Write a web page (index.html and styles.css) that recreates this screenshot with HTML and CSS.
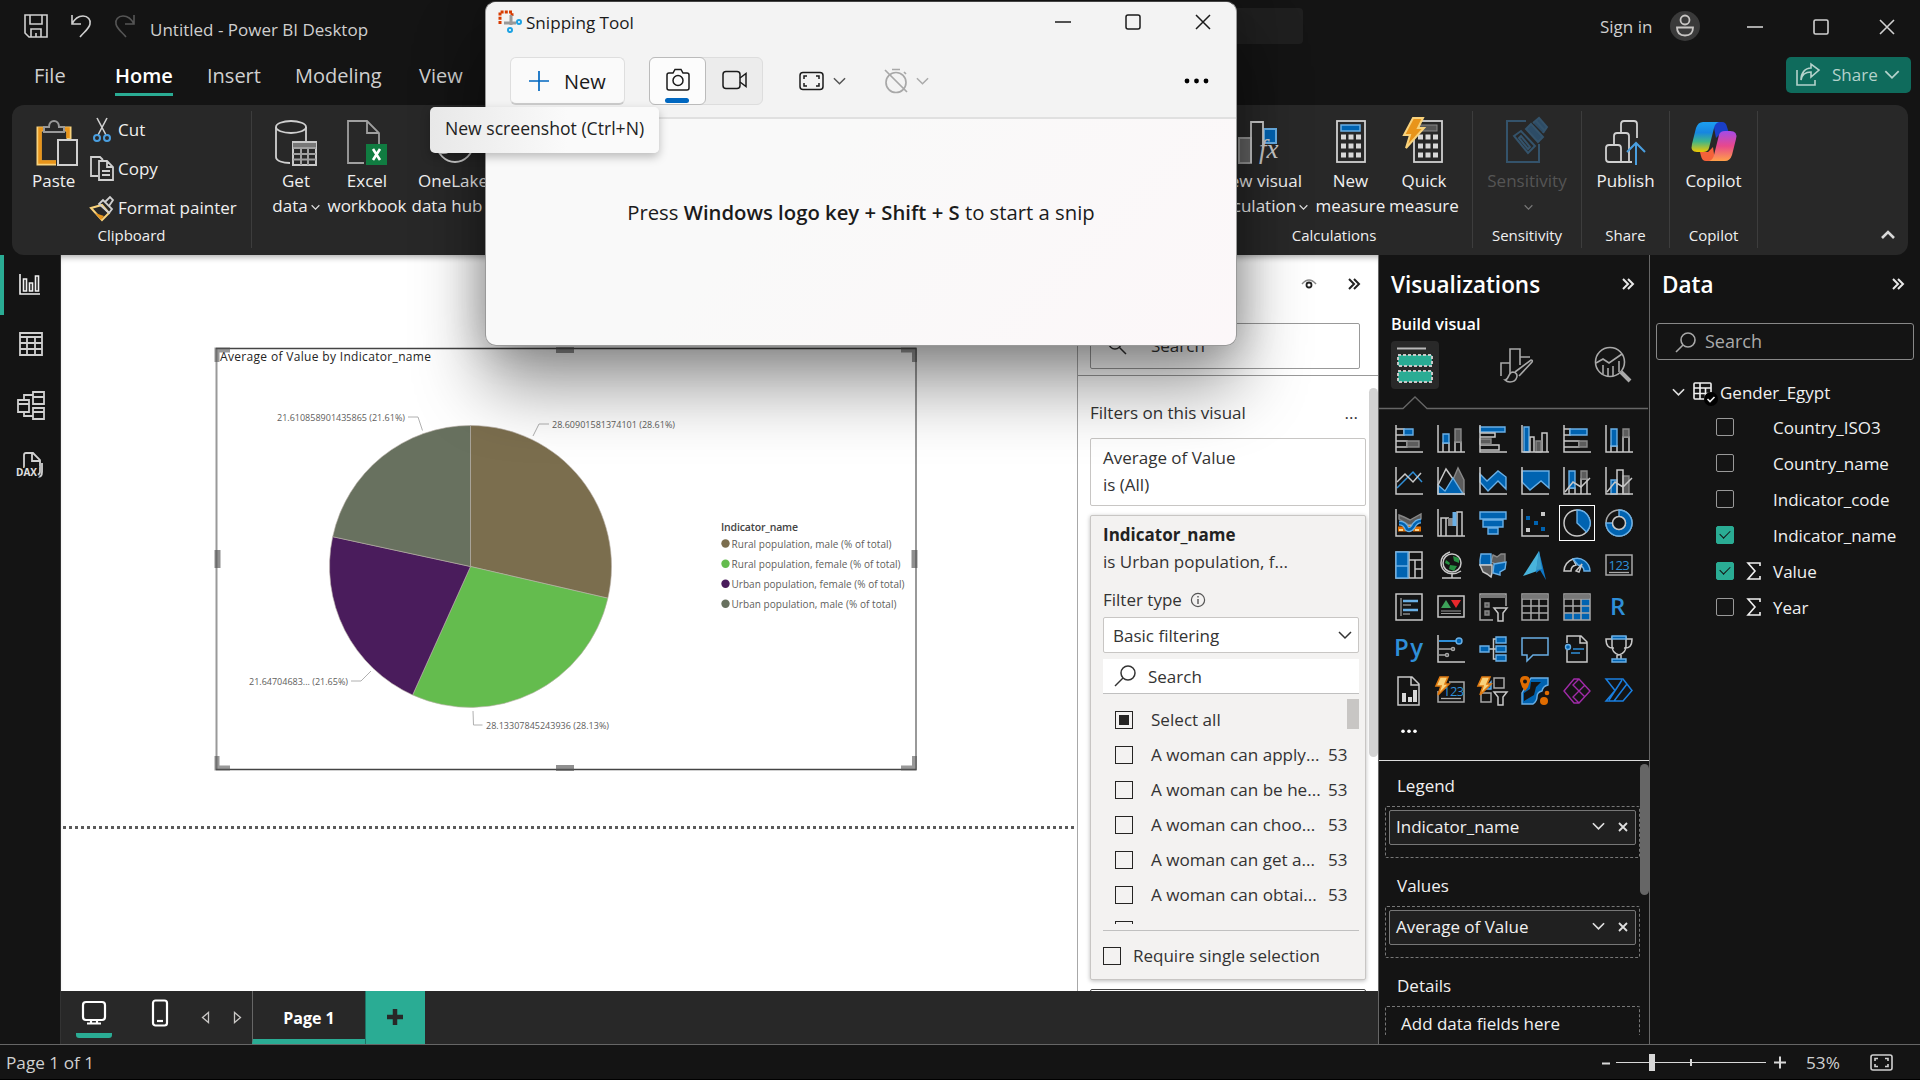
FILE: index.html
```html
<!DOCTYPE html>
<html lang="en">
<head>
<meta charset="utf-8">
<title>Untitled - Power BI Desktop</title>
<link rel="stylesheet" href="styles.css">
</head>
<body>
<svg class="defs" aria-hidden="true">
  <defs>
    <g id="axis"><path class="ln" d="M1 0v27h27"/></g>
    <g id="chev"><path d="M1 1l6 6 6-6"/></g>
    <g id="bolt"><path d="M5 0h8L10 7h4L3 18l3-9H1z" fill="#f8d27c" stroke="#e07a10" stroke-width="1.6"/></g>
    <g id="dbl"><path d="M1 1l5 5-5 5M6 1l5 5-5 5" fill="none" stroke-width="2"/></g>
    <linearGradient id="cpA" x1="0" y1="0" x2="0" y2="1"><stop offset="0" stop-color="#1c9ff0"/><stop offset=".35" stop-color="#1786e0"/><stop offset=".65" stop-color="#3fb58a"/><stop offset="1" stop-color="#f0c800"/></linearGradient>
    <linearGradient id="cpB" x1="0" y1="0" x2="0" y2="1"><stop offset="0" stop-color="#a44be8"/><stop offset=".5" stop-color="#e8488c"/><stop offset="1" stop-color="#ffa048"/></linearGradient>
  </defs>
</svg>

<div class="app">
  <header class="top">
    <div class="titlebar">
      <svg class="ic-save" width="24" height="24" viewBox="0 0 24 24"><path d="M1 1h22v22H5l-4-4zM6 1v9h12V1M7 23v-8h10v8M12 19v4" class="ln2"/></svg>
      <svg class="ic-undo" width="22" height="24" viewBox="0 0 22 24"><path d="M2 1v9h9M2 10C5 4 9 2 13 2c5 0 8 4 7 8-1 5-6 8-10 13" class="ln2"/></svg>
      <svg class="ic-redo" width="22" height="24" viewBox="0 0 22 24"><path d="M20 1v9h-9M20 10C17 4 13 2 9 2 4 2 1 6 2 10c1 5 6 8 10 13" class="ln2 dim"/></svg>
      <span class="doc-title">Untitled - Power BI Desktop</span>
      <div class="global-search"></div>
      <span class="signin">Sign in</span>
      <svg class="avatar" width="30" height="30" viewBox="0 0 30 30"><circle cx="15" cy="15" r="15" fill="#3a3a3a"/><g fill="none" stroke="#c8c6c4" stroke-width="1.8"><circle cx="15" cy="9" r="4.5"/><path d="M7 16.500h16c0 5-3 8-8 8s-8-3-8-8z"/></g></svg>
      <svg class="wbtn" width="16" height="16" viewBox="0 0 16 16"><path class="ln2" d="M0 8h16"/></svg>
      <svg class="wbtn" width="16" height="16" viewBox="0 0 16 16"><rect class="ln2" x="1" y="1" width="14" height="14" rx="1.500"/></svg>
      <svg class="wbtn" width="16" height="16" viewBox="0 0 16 16"><path class="ln2" d="M1 1l14 14M15 1L1 15"/></svg>
    </div>
    <nav class="tabs">
      <span class="t-file">File</span><span class="t-home"><b>Home</b></span><span class="t-insert">Insert</span><span class="t-model">Modeling</span><span>View</span>
      <button class="share"><svg width="24" height="22" viewBox="0 0 24 22"><path d="M1 6v15h18v-5M5 16c1-6 5-8 10-8v5l8-7-8-6v4C9 4 5 9 5 16z" class="sh"/></svg><span>Share</span><svg width="16" height="10" viewBox="0 0 14 9"><use href="#chev" class="sh"/></svg></button>
    </nav>
    <section class="ribbon">
      <div class="group clip">
        <div class="clip-body">
          <div class="big paste">
            <svg width="42" height="46" viewBox="0 0 42 46"><path d="M8 9H2v34h17M27 9h5v10" fill="none" stroke="#f8d27c" stroke-width="5"/><path d="M9 9H3v33h16M26 9h5v9" fill="none" stroke="#e8941a" stroke-width="3.500"/><path d="M7 12V7h5c0-8 10-8 10 0h5v5z" fill="#282828" stroke="#999" stroke-width="2"/><rect x="21" y="20" width="19" height="25" fill="#282828" stroke="#d0d0d0" stroke-width="2"/></svg>
            <span>Paste</span>
          </div>
          <div class="smalls">
            <div><svg width="26" height="26" viewBox="0 0 26 26"><path d="M8 1l9 17M18 1L9 18" stroke="#d0d0d0" stroke-width="1.600" fill="none"/><circle cx="8" cy="21" r="3" fill="none" stroke="#4a9fe0" stroke-width="2"/><circle cx="18" cy="21" r="3" fill="none" stroke="#4a9fe0" stroke-width="2"/></svg>Cut</div>
            <div><svg width="26" height="26" viewBox="0 0 26 26"><path d="M9 20H2V1h9l3 3M10 5h8l6 6v13H10zM18 5v6h6M13 15h8M13 19h8" class="ln3"/></svg>Copy</div>
            <div><svg width="26" height="26" viewBox="0 0 26 26"><path d="M2 13l11-3 7 8-7 7z" fill="#282828" stroke="#f8d27c" stroke-width="2"/><path d="M6 18l9 3-3 4z" fill="#e8941a"/><path d="M10 9l4-4 9 9-3 4zM16 7l5-5 3 3-4 6" class="ln3" fill="#282828"/></svg>Format painter</div>
          </div>
        </div>
        <div class="glabel">Clipboard</div>
      </div>
      <div class="group data-g">
        <div class="big w-get"><svg width="42" height="46" viewBox="0 0 42 46"><ellipse cx="16" cy="7" rx="15" ry="6" class="ln3"/><path d="M1 7v30c0 4 7 6 14 6M31 7v14" class="ln3"/><rect x="18" y="22" width="23" height="23" fill="#282828" stroke="#c8c8c8" stroke-width="2"/><path d="M18 25h23" stroke="#777" stroke-width="4"/><path d="M18 28h23M18 34h23M18 39.500h23M26 28v17M33 28v17" stroke="#a0a0a0" stroke-width="2"/></svg><span>Get<br>data<svg class="mc" width="9" height="7" viewBox="0 0 14 9"><use href="#chev" class="cw"/></svg></span></div>
        <div class="big w-xl"><svg width="42" height="46" viewBox="0 0 42 46"><path d="M18 43H2V1h19l12 12v12M21 1v12h12" class="ln3 mid"/><rect x="20" y="24" width="21" height="21" fill="#107c41"/><path d="M27 29l7 11M34 29l-7 11" stroke="#fff" stroke-width="2.600"/></svg><span>Excel<br>workbook</span></div>
        <div class="big w-ol"><svg width="42" height="46" viewBox="0 0 42 46"><circle cx="23" cy="24" r="18" class="ln3"/><path d="M6 32c8 4 16-3 20-8" class="ln3"/></svg><span>OneLake<br>data hub<svg class="mc" width="9" height="7" viewBox="0 0 14 9"><use href="#chev" class="cw"/></svg></span></div>
      </div>
      <div class="grow"></div>
      <div class="group calc">
        <div class="row">
          <div class="big w-nv"><svg width="44" height="46" viewBox="0 0 44 46"><rect x="1" y="18" width="12" height="25" fill="#666" stroke="#999" stroke-width="2"/><rect x="26" y="9" width="12" height="14" fill="#0063b1" stroke="#69afe5" stroke-width="2"/><path d="M13 43V2h12v26" class="ln3"/><text x="21" y="38" class="fx">fx</text></svg><span>New visual<br>calculation<svg class="mc" width="9" height="7" viewBox="0 0 14 9"><use href="#chev" class="cw"/></svg></span></div>
          <div class="big w-nm"><svg width="32" height="46" viewBox="0 0 32 46"><rect x="2" y="1" width="28" height="41" class="ln3"/><rect x="6" y="5" width="19" height="6" fill="#0063b1" stroke="#69afe5" stroke-width="1.500"/><path d="M6 17h20M6 26h20M6 35h20" stroke="#d8d8d8" stroke-width="5" stroke-dasharray="5 2.500"/></svg><span>New<br>measure</span></div>
          <div class="big w-qm"><svg width="42" height="46" viewBox="0 0 42 46"><rect x="11" y="1" width="28" height="41" class="ln3"/><rect x="16" y="5" width="18" height="6" fill="#555" stroke="#888"/><path d="M15 17h20M15 26h20M15 35h20" stroke="#d8d8d8" stroke-width="5" stroke-dasharray="5 2.500"/><path d="M10-2h10l-5 10h6L3 28l4-13H1z" fill="#e8941a" stroke="#f8d27c" stroke-width="2"/></svg><span>Quick<br>measure</span></div>
        </div>
        <div class="glabel">Calculations</div>
      </div>
      <div class="group sens">
        <div class="big off"><svg width="42" height="46" viewBox="0 0 42 46"><g fill="none" stroke="#34536b" stroke-width="2"><path d="M20 1H1v41h32V24"/><path d="M8 16l7-5 14 15-7 7zM13 18l2-2 9 11-2 2z"/><path d="M20 9l5-5 12 13-5 5zM27 3l6-5 8 9-4 6M30 1l8 9" fill="#2d4c66"/></g></svg><span>Sensitivity<br><svg class="mc" width="9" height="7" viewBox="0 0 14 9"><use href="#chev" class="cw"/></svg></span></div>
        <div class="glabel">Sensitivity</div>
      </div>
      <div class="group shr">
        <div class="big"><svg width="42" height="46" viewBox="0 0 42 46"><path d="M16 42H4q-3 0-3-3V28q0-3 3-3h9q3 0 3 3v14h11M9 24v-8q0-3 3-3h9q3 0 3 3v26M16 12V4q0-3 3-3h10q3 0 3 3v14" class="ln3"/><path d="M31 45V23M22 32l9-9 9 9" fill="none" stroke="#4a9fe0" stroke-width="2"/></svg><span>Publish</span></div>
        <div class="glabel">Share</div>
      </div>
      <div class="group cop">
        <div class="big"><svg width="46" height="46" viewBox="0 0 46 46"><path d="M22 2h9q4 0 5 5l2 6h-8l-5 5z" fill="#1a3fc8"/><path d="M24 41h-9q-4 0-5-5l-1-4h8l5-5z" fill="#f4623a"/><path d="M12 2h16q-4 1-5 6l-5 20q-1 4-6 4H6q-7 0-5-8L5 8q2-6 7-6z" fill="url(#cpA)"/><path d="M34 41H18q4-1 5-6l5-20q1-4 6-4h5q8 0 6 8l-4 16q-2 6-7 6z" fill="url(#cpB)"/></svg><span>Copilot</span></div>
        <div class="glabel">Copilot</div>
      </div>
      <div class="tail"><svg width="14" height="10" viewBox="0 0 14 10"><path d="M1 8l6-6 6 6" fill="none" stroke="#d8d8d8" stroke-width="2.600"/></svg></div>
    </section>
  </header>

  <main class="work">
    <aside class="rail">
      <div class="on"><svg width="24" height="24" viewBox="0 0 24 24"><path d="M2 1v20h20M5.500 6h3v12h-3zM11.500 10h3v8h-3zM17.500 3h3v15h-3z" class="lnw"/></svg></div>
      <div><svg width="26" height="26" viewBox="0 0 26 26"><path d="M2 2h22v22H2zM2 6h22M2 12h22M2 18h22M9 6v18M17 6v18" class="ln3"/></svg></div>
      <div><svg width="30" height="30" viewBox="0 0 30 30"><path d="M2 10h11v12H2zM2 14h11M17 2h11v12H17zM17 7h11M17 18h11v11H17zM17 22h11M8 10V5h9M8 22v4h9" class="ln3"/></svg></div>
      <div><svg width="28" height="28" viewBox="0 0 28 28"><path d="M8 17V4q0-2 2-2h7l7 7v12q0 2-3 3M16 2v8h8M26 12v9q0 5-4 5" class="ln3"/><text x="0" y="25" class="dax">DAX</text></svg></div>
    </aside>

    <section class="center">
      <div class="stage">
        <div class="canvas">
          <svg class="visual" width="704" height="426" viewBox="214 346 704 426">
            <text x="220" y="361" class="vt" textLength="211">Average of Value by Indicator_name</text>
            <g stroke="#b8b0a8" stroke-width=".6">
              <path fill="#7b6e4e" d="M470.500 566.500V425.500A141 141 0 0 1 607.900 598.200z"/>
              <path fill="#64bc4e" d="M470.500 566.500L607.900 598.200A141 141 0 0 1 412.600 695z"/>
              <path fill="#4a1c5c" d="M470.500 566.500L412.600 695A141 141 0 0 1 332.700 536.700z"/>
              <path fill="#68715f" d="M470.500 566.500L332.700 536.700A141 141 0 0 1 470.500 425.500z"/>
            </g>
            <path d="M408 417h10l4.500 13.500M549 424h-10l-6 12M473 711l.5 14h9M371 671l-10 10h-10" fill="none" stroke="#b0b0b0"/>
            <g class="dl">
              <text x="277" y="421" textLength="128">21.610858901435865 (21.61%)</text>
              <text x="552" y="428" textLength="123">28.60901581374101 (28.61%)</text>
              <text x="486" y="729" textLength="123">28.13307845243936 (28.13%)</text>
              <text x="249" y="685" textLength="99">21.64704683... (21.65%)</text>
            </g>
            <text x="721" y="531" class="lt" textLength="77">Indicator_name</text>
            <circle cx="725.500" cy="543.500" r="4.200" fill="#7b6e4e"/><circle cx="725.500" cy="563.800" r="4.200" fill="#64bc4e"/><circle cx="725.500" cy="583.800" r="4.200" fill="#4a1c5c"/><circle cx="725.500" cy="603.800" r="4.200" fill="#68715f"/>
            <g class="dl lg">
              <text x="731.500" y="547.500" textLength="160">Rural population, male (% of total)</text>
              <text x="731.500" y="567.500" textLength="169">Rural population, female (% of total)</text>
              <text x="731.500" y="587.500" textLength="173">Urban population, female (% of total)</text>
              <text x="731.500" y="607.500" textLength="165">Urban population, male (% of total)</text>
            </g>
            <path d="M216.500 348v422M916 348v422" stroke="#999" stroke-width="2"/>
            <path d="M216 348.500h700M216 769.500h700" stroke="#444" stroke-width="1.400"/>
            <path d="M217 362V350h13M901 350h13.500v12M217 756v12h13M901 768h13.500v-12" fill="none" stroke="#555" stroke-opacity=".6" stroke-width="5"/>
            <path d="M556 350h18M556 768h18M217.500 550v18M914.500 550v18" stroke="#555" stroke-opacity=".65" stroke-width="6"/>
          </svg>
          <div class="page-edge"></div>
        </div>
        <aside class="filters">
          <div class="f-head">
            <svg width="16" height="14" viewBox="0 0 16 14"><path d="M1 7Q8-1 15 7" fill="none" stroke="#888" stroke-width="1.500"/><circle cx="8" cy="8" r="2.500" fill="none" stroke="#222" stroke-width="1.800"/></svg>
            <svg width="12" height="12" viewBox="0 0 12 12" stroke="#222"><use href="#dbl"/></svg>
          </div>
          <div class="f-search"><svg width="20" height="20" viewBox="0 0 20 20"><circle cx="8" cy="8" r="6" class="lk"/><path d="M12.500 12.500l6.500 6.500" class="lk"/></svg>Search</div>
          <div class="f-body">
            <div class="f-title">Filters on this visual<i>...</i></div>
            <div class="card">Average of Value<br>is (All)</div>
            <div class="card open">
              <b>Indicator_name</b>
              <div>is Urban population, f...</div>
              <div class="ftype">Filter type<svg width="16" height="16" viewBox="0 0 16 16"><circle cx="8" cy="8" r="6.600" fill="none" stroke="#555" stroke-width="1.200"/><path d="M8 7v5M8 4v1.600" stroke="#555" stroke-width="1.400"/></svg></div>
              <div class="select">Basic filtering<svg width="14" height="9" viewBox="0 0 14 9"><use href="#chev" class="lk"/></svg></div>
              <div class="isearch"><svg width="22" height="22" viewBox="0 0 22 22"><circle cx="14" cy="8" r="7" class="lk"/><path d="M9 13l-8 8" class="lk"/></svg>Search</div>
              <div class="list">
                <div class="li"><i class="cb part"></i><span>Select all</span></div>
                <div class="li"><i class="cb"></i><span>A woman can apply...</span><em>53</em></div>
                <div class="li"><i class="cb"></i><span>A woman can be he...</span><em>53</em></div>
                <div class="li"><i class="cb"></i><span>A woman can choo...</span><em>53</em></div>
                <div class="li"><i class="cb"></i><span>A woman can get a...</span><em>53</em></div>
                <div class="li"><i class="cb"></i><span>A woman can obtai...</span><em>53</em></div>
                <div class="li"><i class="cb"></i><span>A woman can open...</span><em>53</em></div>
                <div class="thumb"></div>
              </div>
              <div class="single"><i class="cb"></i>Require single selection</div>
            </div>
            <div class="card next"></div>
            <div class="f-scroll"></div>
          </div>
        </aside>
      </div>
      <div class="pages">
        <div class="pg-mon"><svg width="26" height="26" viewBox="0 0 26 26"><rect x="2" y="2" width="22" height="18" rx="3" class="lnw2"/><path d="M6 23.500h14M10 20v3M16 20v3" class="lnw2"/></svg></div>
        <div class="pg-ph"><svg width="18" height="28" viewBox="0 0 18 28"><rect x="2" y="1.500" width="14" height="25" rx="2.500" class="lnw2"/><path d="M6 22h6" class="lnw2"/></svg></div>
        <svg class="tri" width="9" height="13" viewBox="0 0 9 13"><path d="M7.500 1.500v10L1.500 6.500z" fill="none" stroke="#c8c6c4" stroke-width="1.300"/></svg>
        <svg class="tri" width="9" height="13" viewBox="0 0 9 13"><path d="M1.500 1.500v10l6-5z" fill="none" stroke="#c8c6c4" stroke-width="1.300"/></svg>
        <div class="pg-tab">Page 1</div>
        <div class="pg-add"><svg width="18" height="18" viewBox="0 0 18 18"><path d="M9 1v16M1 9h16" stroke="#282828" stroke-width="4.500"/></svg></div>
      </div>
    </section>

    <aside class="viz">
      <div class="p-head">Visualizations<svg width="12" height="12" viewBox="0 0 12 12" stroke="#e8e8e8"><use href="#dbl"/></svg></div>
      <div class="sub">Build visual</div>
      <div class="modes">
        <div class="m1"><svg width="36" height="36" viewBox="0 0 36 36"><path d="M0 1.500h29" stroke="#b8b8b8" stroke-width="2"/><path d="M1 8h34v11H1zM1 24h34v11H1z" fill="#2aac94" stroke="#c8c8c8" stroke-width="2" stroke-dasharray="3 2"/></svg></div>
        <svg width="34" height="36" viewBox="0 0 34 36"><path d="M1 29V16h9M10 27V2h10v16M20 10h10" class="ln2 gy"/><path d="M5 33c4 0 3-8 8-8 7 1 4 10-3 10-3 0-4-1-5-2zM15 25L31 13q2 0 1 2L19 29" class="ln2 gy" fill="#141414"/></svg>
        <svg width="38" height="38" viewBox="0 0 38 38"><circle cx="16" cy="16" r="14.500" class="ln2 gy"/><path d="M2 17l7-4 6 4 13-9M9 19v9M14 22v8M19 20v10M25 15v11" class="ln2 gy"/><path d="M27 26l9 9" stroke="#aaa" stroke-width="4"/></svg>
      </div>
      <svg class="notch" width="269" height="14" viewBox="0 0 269 14"><path d="M0 12.500h24L36 1l12 11.500h221" fill="none" stroke="#666" stroke-width="1.300"/></svg>
      <div class="gallery">
        <svg viewBox="0 0 28 28"><path class="ln" d="M1 4h8v6H1M1 16h11v6H1"/><path class="bl" d="M9 4h9v6H9z"/><path class="gr" d="M12 16h12v6H12z"/><use href="#axis"/></svg>
        <svg viewBox="0 0 28 28"><path class="ln" d="M6 27v-9h6v9M18 27V17h6v10"/><path class="bl" d="M6 9h6v9H6z"/><path class="gr" d="M18 4h6v13h-6z"/><use href="#axis"/></svg>
        <svg viewBox="0 0 28 28"><path class="bl" d="M1 2h25v5H1z"/><path class="ln" d="M1 8h15v4H1M1 20h19v5H1"/><path class="gr" d="M1 14h11v5H1z"/><use href="#axis"/></svg>
        <svg viewBox="0 0 28 28"><path class="bl" d="M3 2h5v25H3z"/><path class="ln" d="M9 27V12h4v15M21 27V8h5v19"/><path class="gr" d="M15 16h5v11h-5z"/><use href="#axis"/></svg>
        <svg viewBox="0 0 28 28"><path class="ln" d="M1 4h6v6H1M1 16h15v6H1"/><path class="bl" d="M7 4h17v6H7z"/><path class="gr" d="M16 16h8v6h-8z"/><use href="#axis"/></svg>
        <svg viewBox="0 0 28 28"><path class="ln" d="M6 27v-6h6v6M18 27V12h6v15"/><path class="bl" d="M6 4h6v17H6z"/><path class="gr" d="M18 4h6v8h-6z"/><use href="#axis"/></svg>

        <svg viewBox="0 0 28 28"><path d="M2 21L18 5l9 10" fill="none" stroke="#2f8fd8" stroke-width="1.500"/><path class="ln" d="M2 15l8-8 8 8 8-9"/><use href="#axis"/></svg>
        <svg viewBox="0 0 28 28"><path class="gr" d="M15 15L21 1l6 12v14z"/><path class="ln" d="M1 18L9 2l7 10"/><path class="bl" d="M1 18l7 6 8-13 10 16H1z"/><use href="#axis"/></svg>
        <svg viewBox="0 0 28 28"><path class="bl" d="M1 7l7 7L19 4l8 6v12l-8-8-10 10-8-9z"/><use href="#axis"/></svg>
        <svg viewBox="0 0 28 28"><path class="bl" d="M1 4h27v17l-8-7-11 9-8-8z"/><use href="#axis"/></svg>
        <svg viewBox="0 0 28 28"><path class="ln" d="M6 27v-6h6v6M18 27V12h6v15"/><path class="bl" d="M6 4h6v17H6z"/><path class="gr" d="M18 4h6v8h-6z"/><path class="ln" d="M2 25l8-10 8 5 9-9"/><use href="#axis"/></svg>
        <svg viewBox="0 0 28 28"><path class="bl" d="M6 13h6v14H6z"/><path class="gr" d="M18 9h6v18h-6z"/><path class="ln" d="M12 27V3h6v24M2 25l8-10 8 5 9-9"/><use href="#axis"/></svg>

        <svg viewBox="0 0 28 28"><path d="M3 20h7l4-4 5 4h7" fill="none" stroke="#e06c00" stroke-width="5"/><path d="M12 16h4M4 21h4M20 21h4" stroke="#fbd38a" stroke-width="2"/><path class="gr" d="M4 6l5 2 6 3 11-6v5l-7 5-5 1-10-6z"/><path d="M4 14q6 0 8 6 3 2 6-2 3-6 8-6" fill="none" stroke="#69afe5" stroke-width="5"/><path d="M4 14q6 0 8 6 3 2 6-2 3-6 8-6" fill="none" stroke="#0063b1" stroke-width="2.500"/><use href="#axis"/></svg>
        <svg viewBox="0 0 28 28"><path class="ln" d="M4 27V9h5v18M20 27V3h5v24M9 9h3"/><path fill="#888" d="M11 9h5v8h-5z"/><path fill="#69afe5" d="M15.500 3h4v14h-4z"/><use href="#axis"/></svg>
        <svg viewBox="0 0 28 28"><path class="bl" d="M1 3h26v7H1zM4 11h20v7H4zM9 19h10v6H9z"/></svg>
        <svg viewBox="0 0 28 28"><path fill="#0063b1" d="M5 7h4v4H5zM13 12h4v4h-4zM20 18h4v4h-4z"/><path fill="#c8c8c8" d="M20 3h4v4h-4zM5 19h4v4H5z"/><use href="#axis"/></svg>
        <svg class="sel" viewBox="-4 -4 36 36"><circle cx="14" cy="14" r="13" class="ln"/><path class="bl" d="M14 1a13 13 0 0 1 9.500 22L14 14z"/></svg>
        <svg viewBox="0 0 28 28"><circle cx="14" cy="14" r="13" class="ln gy"/><path class="bl" d="M14 1A13 13 0 1 1 1 14h6.500A6.500 6.500 0 1 0 14 7.500z"/><circle cx="14" cy="14" r="6.500" fill="#141414" class="lw"/></svg>

        <svg viewBox="0 0 28 28"><path class="ln" d="M1 1h26v26H1zM14 1v26M14 9h13M20 9v18M20 18h7"/><path class="bl" d="M1 1h12v14H1zM1 15h12v12H1z"/></svg>
        <svg viewBox="0 0 28 28"><circle cx="15" cy="12" r="9" class="ln"/><path fill="#259040" d="M16 5l6 2v5l-5-2zM9 9l4 3-1 2-4-2zM13 14l7 1-3 5-5-2z"/><path class="ln" d="M13 1Q4 4 4 12q0 7 7 10 7 2 13-2M15 23v4M5 27h19"/></svg>
        <svg viewBox="0 0 28 28"><path class="gr" d="M14 4l4 2 4-3h4v8l-10 2-4-2z"/><path class="bl" d="M2 3h10v11H1V9z"/><path fill="#5c5c5c" class="lw" d="M1 14h12v8l-1 4-4-3-4-2z"/><path class="bl" d="M15 13l12-2-1 7-5 3v3l-7-2z"/></svg>
        <svg viewBox="0 0 28 28"><path fill="#49b4dc" d="M18 0L2 25l17-6z"/><path fill="#0f78c8" d="M18 0l7 29-6-10-4 3z"/><path fill="#3a9cc8" d="M18 0l3 18-6 1z"/></svg>
        <svg viewBox="0 0 28 28"><path class="ln" d="M1 20A13 13 0 0 1 10 8l3 6q-5 1-5 6z"/><path class="bl" d="M10 8a13 13 0 0 1 17 12h-6q0-5-6-6z"/><path class="ln" d="M13 20l6-7-3 8z"/></svg>
        <svg viewBox="0 0 28 28"><path class="ln gy" d="M1 4h26v20H1z"/><text x="3.500" y="19" class="num">123</text><path d="M4 21.500h20" stroke="#aaa" stroke-width="1.300"/></svg>

        <svg viewBox="0 0 28 28"><path class="ln" d="M1 1h26v26H1z"/><path d="M6 5v18M8 12h8M8 21h7" stroke="#888" stroke-width="1.500"/><path d="M8 8h15M8 17h15" stroke="#69afe5" stroke-width="2.500"/></svg>
        <svg viewBox="0 0 28 28"><path class="ln" d="M1 3h26v21H1z"/><path fill="#3da35a" d="M4 15l5-8 5 8z"/><path fill="#e8282c" d="M14 7h10l-5 8z"/><path d="M4 18h20M4 20.500h20" stroke="#999" stroke-width="1"/></svg>
        <svg viewBox="0 0 28 28"><path class="ln gy" d="M14 27H1V1h26v12"/><path d="M1 3.500h26" stroke="#777" stroke-width="3"/><path class="gr" d="M6 10h4v4H6zM6 18h4v4H6z"/><path class="ln" d="M15 15h13l-4 5v8h-5v-8z"/></svg>
        <svg viewBox="0 0 28 28"><path class="ln gy" d="M1 1h26v26H1zM1 6h26M1 13h26M1 20h26M10 6v21M18 6v21"/><path d="M1 3.500h26" stroke="#777" stroke-width="4"/></svg>
        <svg viewBox="0 0 28 28"><path fill="#0063b1" d="M18 6h9v21H1v-7h17z"/><path class="ln gy" d="M1 1h26v26H1zM1 6h26M1 13h26M1 20h26M10 6v21M18 6v21"/><path d="M1 3.500h26" stroke="#777" stroke-width="4"/></svg>
        <svg viewBox="0 0 28 28"><text x="5" y="22" class="big-r">R</text></svg>

        <svg viewBox="0 0 28 28"><text x="-1" y="21" class="big-r" textLength="29">Py</text></svg>
        <svg viewBox="0 0 28 28"><path d="M2 6h20" stroke="#2f8fd8" stroke-width="2"/><circle cx="22" cy="6" r="3" class="bl"/><path class="ln gy" d="M2 14h12M2 20h7"/><circle cx="16" cy="14" r="1.500" class="ln gy"/><circle cx="10" cy="20" r="1.500" class="ln gy"/><use href="#axis"/></svg>
        <svg viewBox="0 0 28 28"><path class="ln" d="M10 14h7M17 4h-2.500v20H17"/><path class="bl" d="M1 11h9v6H1zM17 2h10v6H17zM17 11h10v6H17zM17 20h10v6H17z"/></svg>
        <svg viewBox="0 0 28 28"><path fill="none" stroke="#69afe5" stroke-width="1.500" d="M1 3h26v17H12l-6 6v-6H1z"/></svg>
        <svg viewBox="0 0 28 28"><path class="ln" d="M4 8V1h14l6 6v20H4V15M17 1v7h7"/><circle cx="5" cy="12" r="2.500" class="bl"/><path d="M10 14h11M8 18h9" stroke="#2f8fd8" stroke-width="1.500"/></svg>
        <svg viewBox="0 0 28 28"><path class="ln" d="M7 4H1q0 10 8 9M21 4h6q0 10-8 9M7 2h14v9q0 7-7 9-7-2-7-9zM12 20v4M16 20v4"/><path class="bl" d="M7 1h14v3H7zM7 24h14v3H7z"/></svg>

        <svg viewBox="0 0 28 28"><path class="ln lw" d="M3 0h14l7 7v21H3zM16 0v8h8"/><path fill="#d8d8d8" d="M7 16h4v9H7zM13 20h4v5h-4zM18 13h4v12h-4z"/></svg>
        <svg viewBox="0 0 28 28"><path class="ln gy" d="M1 14v11h26V5H12"/><text x="6" y="19" class="num sm">123</text><path d="M4 21.500h20" stroke="#aaa" stroke-width="1.300"/><use href="#bolt" x="-2"/></svg>
        <svg viewBox="0 0 28 28"><path class="ln gy" d="M15 1h10v10H15zM2 16h10v9H2z"/><path class="bl" d="M6 12l6-7v7z"/><path class="ln" fill="#141414" d="M15 15h13l-4 5v8h-5v-8z"/><use href="#bolt" x="-2"/></svg>
        <svg viewBox="0 0 28 28"><path class="bl" d="M10 1h17v7q-5 1-6 6-5 1-5 6 0 4-4 7H1V16z"/><path fill="#141414" d="M10 5h10l-5 5-2 8-5 3-5 3v-8l6-4z"/><path fill="#e06c00" d="M4-1q5 0 5 5l-2 6-3 4-3-4-2-6q0-5 5-5z"/><circle cx="4" cy="4.500" r="2" fill="#141414"/><circle cx="23" cy="24" r="4" fill="#e06c00"/><circle cx="26" cy="16" r="2.300" fill="#e06c00"/></svg>
        <svg viewBox="0 0 28 28"><path fill="none" stroke="#a02ba8" stroke-width="1.400" d="M1 14L11 2h5l11 12-11 12h-5zM16 2l-6 6 12 12M16 26l-6-6L22 8"/></svg>
        <svg viewBox="0 0 28 28"><path fill="none" stroke="#1a7fe0" stroke-width="1.500" d="M1 2h17l9 11.500L18 24H1l9-10.500zM17 3L4 23M22 7L9 24"/></svg>
        <svg viewBox="0 0 28 28"><circle cx="8" cy="12.200" r="1.800" fill="#fff"/><circle cx="14" cy="12.200" r="1.800" fill="#fff"/><circle cx="20" cy="12.200" r="1.800" fill="#fff"/></svg>
      </div>
      <div class="wells">
        <div class="wl">Legend</div>
        <div class="well"><div class="pill"><span>Indicator_name</span><svg width="13" height="9" viewBox="0 0 14 9"><use href="#chev" class="cw"/></svg><svg width="10" height="10" viewBox="0 0 10 10"><path d="M1 1l8 8M9 1L1 9" class="cw"/></svg></div></div>
        <div class="wl">Values</div>
        <div class="well"><div class="pill"><span>Average of Value</span><svg width="13" height="9" viewBox="0 0 14 9"><use href="#chev" class="cw"/></svg><svg width="10" height="10" viewBox="0 0 10 10"><path d="M1 1l8 8M9 1L1 9" class="cw"/></svg></div></div>
        <div class="wl">Details</div>
        <div class="well empty">Add data fields here</div>
        <div class="w-scroll"></div>
      </div>
    </aside>

    <aside class="data">
      <div class="p-head">Data<svg width="12" height="12" viewBox="0 0 12 12" stroke="#e8e8e8"><use href="#dbl"/></svg></div>
      <div class="d-search"><svg width="22" height="22" viewBox="0 0 22 22"><circle cx="13" cy="9" r="7" class="ln2 gy"/><path d="M8 14l-7 7" class="ln2 gy"/></svg>Search</div>
      <div class="table-row"><svg width="13" height="9" viewBox="0 0 14 9"><use href="#chev" class="cw"/></svg><svg width="26" height="26" viewBox="0 0 26 26"><path d="M2 3q0-1 1-1h15q1 0 1 1v14q0 1-1 1H3q-1 0-1-1zM2 7h17M2 12.500h17M8 2v16M13.500 7v11" class="lnw"/><circle cx="19" cy="18" r="7" fill="#000"/><path d="M15.500 18l2.500 2.500 4.500-4.500" class="lnw"/></svg><span>Gender_Egypt</span></div>
      <div class="field"><i class="dcb"></i><s></s>Country_ISO3</div>
      <div class="field"><i class="dcb"></i><s></s>Country_name</div>
      <div class="field"><i class="dcb"></i><s></s>Indicator_code</div>
      <div class="field"><i class="dcb ck"></i><s></s>Indicator_name</div>
      <div class="field"><i class="dcb ck"></i><s><svg width="16" height="18" viewBox="0 0 16 18"><path d="M14 4V1H2l7 8-7 8h12v-3" class="lnw"/></svg></s>Value</div>
      <div class="field"><i class="dcb"></i><s><svg width="16" height="18" viewBox="0 0 16 18"><path d="M14 4V1H2l7 8-7 8h12v-3" class="lnw"/></svg></s>Year</div>
    </aside>
  </main>

  <footer class="status">
    <span>Page 1 of 1</span>
    <svg class="zoomer" width="186" height="20" viewBox="0 0 186 20"><path d="M1 11.500h8M173 10.500h12M179 4.500v12" stroke="#d8d8d8" stroke-width="2"/><path d="M15 10.500h150" stroke="#d8d8d8"/><path d="M51 2v17" stroke="#d8d8d8" stroke-width="6"/><path d="M90 7v7" stroke="#d8d8d8" stroke-width="2"/></svg>
    <span class="pct">53%</span>
    <svg class="fit" width="23" height="17" viewBox="0 0 23 17"><rect x="1" y="1" width="21" height="15" rx="2" class="ln2"/><path d="M8 4.500H5V7M15 4.500h3V7M8 12.500H5V10M15 12.500h3V10" class="ln2"/></svg>
  </footer>
</div>

<div class="snip">
  <div class="s-title">
    <svg width="24" height="24" viewBox="0 0 24 24"><path d="M2 14V2h12v4" fill="none" stroke="#d83b01" stroke-width="3" stroke-dasharray="3 1.200"/><path d="M13 5v10M6 13h12" stroke="#999" stroke-width="3"/><circle cx="21" cy="12" r="2" fill="#fff" stroke="#1ba1e2" stroke-width="2"/><circle cx="12" cy="20" r="2" fill="#fff" stroke="#1ba1e2" stroke-width="2"/></svg>
    <span>Snipping Tool</span>
    <svg class="sb" width="16" height="16" viewBox="0 0 16 16"><path class="k" d="M0 8h16"/></svg>
    <svg class="sb" width="16" height="16" viewBox="0 0 16 16"><rect class="k" x="1" y="1" width="14" height="14" rx="2"/></svg>
    <svg class="sb" width="16" height="16" viewBox="0 0 16 16"><path class="k" d="M1 1l14 14M15 1L1 15"/></svg>
  </div>
  <div class="s-bar">
    <div class="new"><svg width="20" height="20" viewBox="0 0 20 20"><path d="M10 0v20M0 10h20" stroke="#0067c0" stroke-width="1.700"/></svg><span>New</span></div>
    <div class="seg">
      <div class="cam"><svg width="26" height="24" viewBox="0 0 26 24"><path d="M4 5h4l2-3.500h6L18 5h4q2 0 2 2v13q0 2-2 2H4q-2 0-2-2V7q0-2 2-2z" class="k"/><circle cx="13" cy="12.500" r="5" class="k"/></svg></div>
      <div class="vid"><svg width="26" height="20" viewBox="0 0 26 20"><rect x="1" y="1.500" width="17" height="17" rx="3" class="k"/><path d="M18 8l6-4.500v13L18 12" class="k"/></svg></div>
    </div>
    <svg class="rect" width="26" height="20" viewBox="0 0 26 20"><rect x="1" y="1.500" width="23" height="17" rx="3" class="k"/><path d="M8 5H5v3M17 5h3v3M8 15H5v-3M17 15h3v-3" class="k"/></svg>
    <svg class="c1" width="13" height="9" viewBox="0 0 14 9"><use href="#chev" class="kg"/></svg>
    <svg class="timer" width="26" height="26" viewBox="0 0 26 26"><g fill="none" stroke="#a8a8a8" stroke-width="1.700"><circle cx="13" cy="14.500" r="10"/><path d="M2 2l22 22M9 1.500h8M21 4l2 2"/></g></svg>
    <svg class="c1" width="13" height="9" viewBox="0 0 14 9"><use href="#chev" class="kl"/></svg>
    <svg class="more" width="26" height="6" viewBox="0 0 26 6"><circle cx="3" cy="3" r="2.400"/><circle cx="12.500" cy="3" r="2.400"/><circle cx="22" cy="3" r="2.400"/></svg>
  </div>
  <div class="s-body">Press <b>Windows logo key + Shift + S</b> to start a snip</div>
</div>
<div class="tip">New screenshot (Ctrl+N)</div>
</body>
</html>
```
FILE: styles.css
```css
* { box-sizing: border-box; }
body { margin: 0; width: 1920px; height: 1080px; overflow: hidden; background: #141414; color: #e6e6e6; font: 17px/25px "Open Sans", "Noto Sans", sans-serif; }
svg { display: block; flex: none; overflow: visible; }
i, em { font-style: normal; }
s { text-decoration: none; }
.defs { position: absolute; width: 0; height: 0; }

/* strokes shared by the icons */
.ln { fill: none; stroke: #c8c8c8; stroke-width: 1.5; }
.lw { stroke: #c8c8c8; stroke-width: 1.5; }
.ln2 { fill: none; stroke: #d0d0d0; stroke-width: 1.6; }
.ln3 { fill: none; stroke: #d0d0d0; stroke-width: 1.8; }
.lnw { fill: none; stroke: #f0f0f0; stroke-width: 1.6; }
.lnw2 { fill: none; stroke: #fff; stroke-width: 2.2; }
.bl { fill: #0063b1; stroke: #69afe5; stroke-width: 1.4; }
.gr { fill: #5c5c5c; stroke: #888; stroke-width: 1.4; }
.gy { stroke: #a8a8a8; }
.mid { stroke: #a0a0a0; }
.dim { stroke: #555; }
.lk { fill: none; stroke: #333; stroke-width: 1.5; }
.k { fill: none; stroke: #1b1b1b; stroke-width: 1.5; }
.kg { fill: none; stroke: #555; stroke-width: 1.6; }
.kl { fill: none; stroke: #aaa; stroke-width: 1.6; }
.cw { fill: none; stroke: #e0e0e0; stroke-width: 1.8; }
.sh { fill: none; stroke: #b4d2cb; stroke-width: 1.6; }

.app { display: grid; grid-template-columns: minmax(0, 1fr); grid-template-rows: 255px 789px 36px; height: 1080px; }

/* title bar and tabs */
.titlebar { display: flex; align-items: center; height: 52px; padding-left: 24px; }
.titlebar > * { flex: none; }
.ic-save { margin-right: 22px; }
.ic-undo { margin-right: 22px; }
.ic-redo { margin-right: 14px; }
.doc-title { width: 549px; padding-top: 6px; color: #cfcfcf; white-space: nowrap; }
.global-search { width: 604px; height: 36px; border-radius: 4px; background: #1f1f1f; }
.signin { width: 70px; margin-left: 297px; color: #cfcfcf; white-space: nowrap; }
.avatar { margin-right: 47px; }
.wbtn { margin: 2px 50px 0 0; }
.wbtn:last-child { margin-right: 0; }
.tabs { display: flex; height: 53px; padding-left: 34px; font-size: 20px; line-height: 26px; color: #d0d0d0; }
.tabs > span { padding-top: 11px; white-space: nowrap; }
.t-file { width: 81px; } .t-home { width: 92px; } .t-insert { width: 88px; } .t-model { width: 124px; }
.t-home b { display: inline-block; height: 33px; border-bottom: 3px solid #2aac94; font-weight: 600; color: #fff; }
.share { display: flex; align-items: center; width: 125px; height: 36px; margin: 5px 9px 0 auto; padding: 0 0 0 10px; border: 0; border-radius: 5px; background: #0f6b5c; color: #b4d2cb; font: 17px/24px "Open Sans", sans-serif; }
.share span { width: 52px; margin-left: 12px; text-align: left; }

/* ribbon */
.ribbon { display: flex; height: 150px; margin: 0 12px; border-radius: 12px; background: #282828; color: #f0f0f0; }
.group { display: flex; flex-direction: column; flex: none; margin: 6px 0 7px; border-right: 1px solid #3d3d3d; }
.group .row { display: flex; }
.glabel { margin-top: auto; height: 25px; font-size: 15px; line-height: 25px; text-align: center; }
.big { display: flex; flex-direction: column; align-items: center; padding-top: 9px; text-align: center; white-space: nowrap; }
.big > span { margin-top: 2px; }
.big .mc { display: inline-block; margin-left: 3px; vertical-align: 1px; }
.clip { width: 240px; }
.clip-body { display: flex; height: 112px; }
.paste { width: 66px; padding-left: 18px; align-items: flex-start; }
.paste svg { margin-left: 7px; }
.paste span { margin-left: 2px; }
.smalls { padding-left: 11px; margin-top: -1px; }
.smalls div { display: flex; align-items: center; gap: 3px; height: 39px; white-space: nowrap; }
.data-g { flex-direction: row; border: 0; }
.w-get { width: 74px; padding-left: 14px; } .w-xl { width: 82px; } .w-ol { width: 90px; }
.grow { flex: 1; }
.calc { width: 272px; }
.w-nv { width: 112px; padding-left: 5px; } .w-nm { width: 75px; } .w-qm { width: 72px; }
.fx { font: italic 27px "Liberation Serif", serif; fill: #c8c8c8; }
.calc .glabel { width: 266px; }
.sens { width: 109px; } .shr { width: 88px; } .cop { width: 88px; }
.off span { color: #555; }
.off .cw { stroke: #777; }
.tail { display: flex; align-items: flex-end; justify-content: flex-end; width: 150px; padding: 0 13px 15px 0; }

/* work area */
.work { display: grid; grid-template-columns: 61px 1318px 271px minmax(0, 1fr); min-height: 0; }
.rail { border-right: 1px solid #333; }
.rail div { display: flex; align-items: center; padding-left: 18px; height: 60px; }
.rail .on { border-left: 4px solid #2aac94; padding-left: 14px; }
.rail div:nth-child(n+2) { margin-top: -1px; height: 61px; padding-bottom: 1px; }
.rail div:nth-child(n+3) { padding-left: 16px; margin-top: 0; height: 60px; }
.dax { font: 700 10px "Open Sans", sans-serif; fill: #e0e0e0; stroke: #141414; stroke-width: 3px; paint-order: stroke; }
.center { display: grid; grid-template-rows: 736px 53px; min-height: 0; }
.stage { display: flex; background: #fff; min-height: 0; box-shadow: inset 0 6px 6px -4px #aaa; }
.canvas { width: 1016px; padding: 91px 0 0 153px; }
.vt { font-size: 12px; fill: #252423; }
.dl { font-size: 9px; fill: #605e5c; }
.lg { font-size: 10px; }
.lt { font-size: 10.5px; font-weight: 600; fill: #444; }
.page-edge { width: 1012px; height: 3px; margin: 54px 0 0 -151px; background: repeating-linear-gradient(90deg, #5a5a5a 0 3px, transparent 3px 6px); }

.filters { display: flex; flex-direction: column; width: 302px; border-left: 1px solid #a8a8a8; border-right: 1px solid #666; color: #333; overflow: hidden; }
.f-head { display: flex; align-items: center; height: 68px; padding: 0 0 10px 223px; gap: 31px; }
.f-search { display: flex; align-items: center; height: 46px; width: 270px; margin: 0 0 6px 12px; padding: 0 0 2px 16px; gap: 24px; border: 1px solid #999; border-radius: 2px; }
.f-body { position: relative; flex: 1; border-top: 1px solid #999; padding: 24px 12px 0 12px; min-height: 0; overflow: hidden; white-space: nowrap; }
.f-title { display: flex; justify-content: space-between; height: 38px; padding-right: 8px; }
.card { height: 68px; padding: 5px 12px; border: 1px solid #c8c6c4; border-radius: 2px; line-height: 27px; background: #fff; }
.card.open { height: 465px; margin: 9px 0; padding: 5px 6px 0 12px; background: #f3f2f1; box-shadow: 0 1px 4px #bbb; }
.card.open b { display: block; font-weight: 700; color: #222; }
.card.next { border-color: #444; }
.ftype { display: flex; align-items: center; gap: 8px; height: 37px; padding-top: 10px; margin: 1px 0 4px; }
.select { display: flex; align-items: center; justify-content: space-between; height: 36px; padding: 0 6px 0 9px; border: 1px solid #c8c6c4; border-radius: 2px; background: #fff; }
.isearch { display: flex; align-items: center; gap: 12px; height: 35px; margin-top: 6px; padding-left: 11px; border-bottom: 1px solid #c0c0c0; background: #fff; }
.list { position: relative; height: 230px; padding-top: 8px; overflow: hidden; }
.li { display: flex; align-items: center; height: 35px; padding-left: 12px; }
.li span { width: 177px; margin-left: 18px; font-size: 17.1px; }
.cb { flex: none; display: block; width: 18px; height: 18px; border: 1.5px solid #252423; }
.cb.part { background: #252423; background-clip: content-box; padding: 3px; }
.thumb { position: absolute; right: 0; top: 5px; width: 12px; height: 30px; background: #c8c6c4; }
.single { display: flex; align-items: center; gap: 12px; margin-top: 6px; height: 50px; border-top: 1px solid #c0c0c0; }
.f-scroll { position: absolute; right: 0; top: 12px; width: 9px; height: 369px; border-radius: 5px; background: #d2d2d2; }

.pages { display: flex; align-items: center; background: #282828; border-right: 1px solid #666; }
.pg-mon { width: 36px; height: 47px; margin: -6px 0 0 15px; padding: 9px 0 0 5px; border-bottom: 5px solid #2aac94; border-radius: 0 0 3px 3px; }
.pg-ph { margin: -9px 32px 0 39px; }
.tri { margin: 0 22px 0 0; }
.tri + .tri { margin: 0 10px 0 1px; }
.pg-tab { width: 113px; height: 53px; border-left: 1px solid #666; border-bottom: 5px solid #2aac94; color: #fff; font-weight: 700; font-size: 16px; line-height: 55px; text-align: center; }
.pg-add { display: flex; align-items: center; justify-content: center; width: 60px; height: 53px; padding: 0 2px 2px 0; border-left: 1px solid #1c7465; background: #2aac94; }

/* visualizations pane */
.viz { display: flex; flex-direction: column; border-right: 1px solid #666; min-height: 0; overflow: hidden; }
.p-head { display: flex; align-items: center; justify-content: space-between; height: 58px; padding: 0 15px 0 12px; font-size: 22.5px; font-weight: 600; color: #fff; }
.sub { height: 28px; padding-left: 12px; line-height: 22px; font-size: 16.2px; font-weight: 600; color: #fff; }
.modes { display: flex; align-items: center; justify-content: space-between; height: 48px; padding: 0 17px 0 12px; }
.m1 { display: flex; align-items: center; justify-content: center; width: 48px; height: 48px; border-radius: 4px; background: #292929; }
.notch { margin-top: 7px; }
.gallery { display: grid; grid-template-columns: repeat(6, 42px); grid-auto-rows: 42px; place-items: center; height: 350px; padding: 8px 0 0 9px; }
.gallery svg { width: 28px; height: 28px; }
.gallery .sel { width: 36px; height: 36px; outline: 1.5px solid #fff; outline-offset: -1px; }
.num { font: 13px "Open Sans", sans-serif; fill: #2f8fd8; letter-spacing: -0.5px; }
.big-r { font: 600 24px "Open Sans", sans-serif; fill: #2f8fd8; }
.wells { position: relative; flex: 1; min-height: 0; margin-bottom: 9px; padding: 12px 9px 0 6px; border-top: 1.5px solid #ddd; overflow: hidden; color: #f0f0f0; }
.wl { height: 33px; padding-left: 12px; }
.well { height: 52px; margin-bottom: 15px; padding: 3px; border: 1px dashed #777; border-radius: 2px; }
.well.empty { height: 30px; margin: 0; padding: 5px 15px 0; border-bottom: 0; line-height: 24px; }
.pill { display: flex; align-items: center; height: 35px; padding: 0 7px 2px 6px; gap: 13px; border: 1px solid #777; border-radius: 2px; background: #202020; }
.pill span { flex: 1; }
.w-scroll { position: absolute; right: 0; top: 3px; width: 9px; height: 131px; border-radius: 5px; background: #666; }

/* data pane */
.data { color: #f0f0f0; }
.data .p-head { padding-right: 16px; }
.d-search { display: flex; align-items: center; gap: 8px; width: 258px; height: 37px; margin: 10px 0 15px 6px; padding-left: 18px; border: 1px solid #888; border-radius: 3px; font-size: 18px; color: #aaa; }
.table-row { display: flex; align-items: center; height: 34px; padding-left: 22px; }
.table-row svg:nth-child(2) { margin: 4px 2px 0 7px; }
.field { display: flex; align-items: center; height: 36px; padding-left: 66px; }
.dcb { position: relative; width: 18px; height: 18px; border: 1.5px solid #999; border-radius: 2px; }
.dcb.ck { border-color: #2aac94; background: #2aac94; }
.dcb.ck::after { content: ""; position: absolute; left: 3px; top: 3px; width: 9px; height: 5px; border: solid #141414; border-width: 0 0 1.5px 1.5px; transform: rotate(-45deg); }
.field s { width: 39px; padding-left: 12px; }

.status { display: flex; align-items: center; padding: 0 27px 0 6px; border-top: 1px solid #666; border-bottom: 1px solid #000; color: #d0d0d0; }
.status span { padding-top: 1px; font-size: 17.2px; }
.zoomer { margin-left: auto; }
.pct { width: 64px; margin-left: 19px; }

/* snipping tool window, floating over the app */
.snip { position: absolute; left: 485px; top: 1px; width: 752px; height: 345px; border: 1px solid #999; border-top-color: #444; border-radius: 11px; background: linear-gradient(135deg, #f9f9f9 45%, #fcf7f9); color: #1b1b1b; box-shadow: 0 40px 70px rgba(0,0,0,.42), 0 0 40px rgba(0,0,0,.22); overflow: hidden; }
.s-title { display: flex; align-items: center; height: 42px; padding: 0 0 2px 12px; background: #f3f3f3; }
.s-title span { flex: none; width: 529px; margin-left: 4px; font-size: 17.1px; }
.sb { margin-right: 54px; }
.sb:last-child { margin-right: 0; }
.s-bar { display: flex; align-items: center; height: 75px; padding: 1px 26px 0 24px; border-bottom: 2px solid #e0e0e0; background: #f3f3f3; }
.new { display: flex; align-items: center; gap: 15px; width: 115px; height: 48px; padding-left: 18px; border: 1px solid #dedede; border-bottom: 2px solid #ccc; border-radius: 6px; background: #fafafa; font-size: 20px; }
.new span { padding-top: 2px; }
.seg { display: flex; width: 114px; height: 48px; margin-left: 24px; border: 1px solid #ddd; border-radius: 6px; background: #ececec; }
.cam { width: 57px; height: 48px; margin: -1px; padding: 10px 15px; border: 1px solid #bbb; border-radius: 6px; background: #fcfcfc; }
.cam::after { content: ""; display: block; width: 24px; height: 5px; margin-top: 6px; border-radius: 3px; background: #0067c0; }
.vid { padding: 12px 0 0 17px; }
.rect { margin: 0 8px 0 36px; }
.timer { margin: 0 7px 0 37px; }
.more { margin-left: auto; }
.s-body { padding-top: 79px; font-size: 20.3px; text-align: center; line-height: 28px; }
.s-body b { font-weight: 600; }
.tip { position: absolute; left: 430px; top: 107px; width: 229px; height: 46px; border-radius: 5px; background: linear-gradient(90deg, #e8e8e8, #fafafa 60%); color: #222; line-height: 43px; font-size: 17.6px; text-align: center; white-space: nowrap; box-shadow: 0 4px 10px rgba(0,0,0,.25); }
```
